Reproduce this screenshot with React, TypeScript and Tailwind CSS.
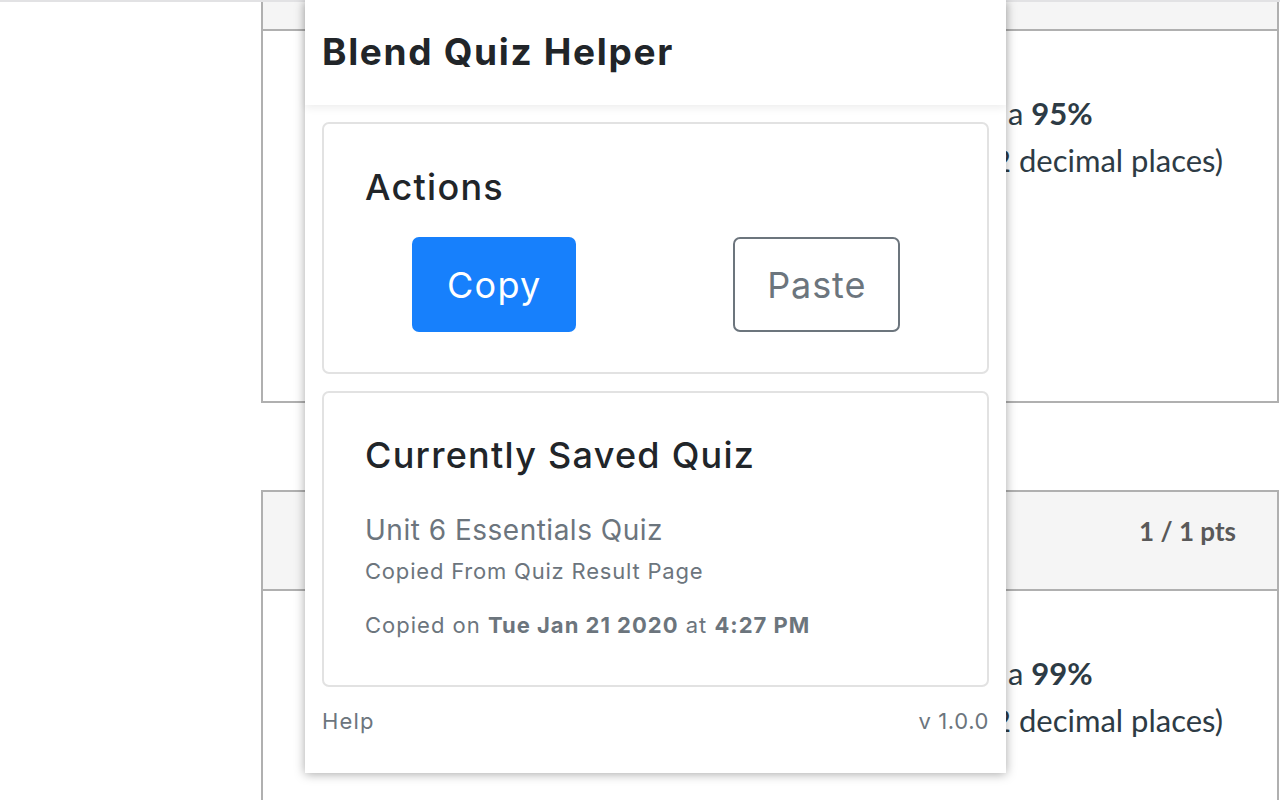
import React from "react";

// Background quiz page (Canvas-like) sits under the extension popup
function QuestionBody({ score }: { score: string }) {
  return (
    <div className="pl-[42px] text-[31px] leading-[47px] text-[#2d3b45]" style={{ fontFamily: "Lato, 'Open Sans', sans-serif" }}>
      <div className="flex whitespace-nowrap">
        <span className="w-[703px] shrink-0">What score did you get on this quiz? You got</span>
        <span>
          a <b className="font-bold">{score}</b>
        </span>
      </div>
      <div className="flex whitespace-nowrap">
        <span className="w-[688px] shrink-0">(round your answer to</span>
        <span>2 decimal places)</span>
      </div>
    </div>
  );
}

function Popup() {
  return (
    <div
      className="absolute left-[305px] top-0 w-[701px] h-[773px] bg-white flex flex-col shadow-[0_1px_10px_rgba(0,0,0,0.35)]"
      style={{ fontFamily: "Inter, 'Liberation Sans', sans-serif" }}
    >
      <div className="relative z-10 h-[105px] flex items-center px-[17px] bg-white shadow-[0_3px_8px_rgba(0,0,0,0.07)]">
        <h1 className="text-[37px] font-bold text-[#212529] leading-[1.2] tracking-[0.045em]">Blend Quiz Helper</h1>
      </div>

      <div className="flex flex-col gap-[17px] px-[17px] pt-[17px]">
        <div className="border-2 border-[#e2e2e2] rounded-[7px] px-[41px] pt-[42px] pb-[40px]">
          <h3 className="text-[36px] font-medium text-[#212529] leading-[43px] tracking-[0.035em]">Actions</h3>
          <div className="grid grid-cols-2 -mx-[32px] mt-[28px]">
            <div className="flex justify-center">
              <button className="w-[164px] h-[95px] rounded-[7px] bg-[#1780fc] text-white text-[36px] tracking-[0.035em] flex items-center justify-center">
                Copy
              </button>
            </div>
            <div className="flex justify-center">
              <button className="w-[167px] h-[95px] rounded-[7px] border-2 border-[#6c757d] text-[#6c757d] text-[36px] tracking-[0.025em] flex items-center justify-center">
                Paste
              </button>
            </div>
          </div>
        </div>

        <div className="border-2 border-[#e2e2e2] rounded-[7px] px-[41px] pt-[41px] pb-[43px]">
          <h3 className="text-[36px] font-medium text-[#212529] leading-[43px] tracking-[0.035em]">Currently Saved Quiz</h3>
          <div className="mt-[36px] text-[28px] leading-[34px] text-[#6c757d] tracking-[0.5px]">Unit 6 Essentials Quiz</div>
          <div className="mt-[8px] text-[22px] leading-[33px] text-[#6c757d] tracking-[0.8px]">Copied From Quiz Result Page</div>
          <div className="mt-[21px] text-[22px] leading-[33px] text-[#6c757d] tracking-[1px]">
            Copied on <b className="font-bold">Tue Jan 21 2020</b> at <b className="font-bold">4:27 PM</b>
          </div>
        </div>
      </div>

      <div className="flex justify-between px-[17px] pt-[18px] text-[22px] leading-[33px] text-[#6c757d]">
        <span className="tracking-[1.2px]">Help</span>
        <span className="tracking-[0.6px]">v 1.0.0</span>
      </div>
    </div>
  );
}

export default function App() {
  return (
    <div className="relative w-[1280px] h-[800px] overflow-hidden bg-white">
      <div className="h-[2px] bg-[#e2e2e4]" />
      <div className="ml-[261px] mr-[1px]">
        <div className="border-x-2 border-b-2 border-[#b0b0b0]">
          <div className="h-[29px] bg-[#f5f5f5] border-b-2 border-[#b0b0b0]" />
          <div className="h-[370px] pt-[59px]">
            <QuestionBody score="95%" />
          </div>
        </div>

        <div className="mt-[87px] border-x-2 border-t-2 border-[#b0b0b0]">
          <div
            className="h-[99px] bg-[#f5f5f5] border-b-2 border-[#b0b0b0] flex items-start justify-between pt-[20px] pl-[42px] pr-[41px] text-[26px] font-bold text-[#595959]"
            style={{ fontFamily: "Lato, 'Open Sans', sans-serif" }}
          >
            <span>Question 2</span>
            <span>1 / 1 pts</span>
          </div>
          <div className="h-[300px] pt-[59px]">
            <QuestionBody score="99%" />
          </div>
        </div>
      </div>
      <Popup />
    </div>
  );
}
